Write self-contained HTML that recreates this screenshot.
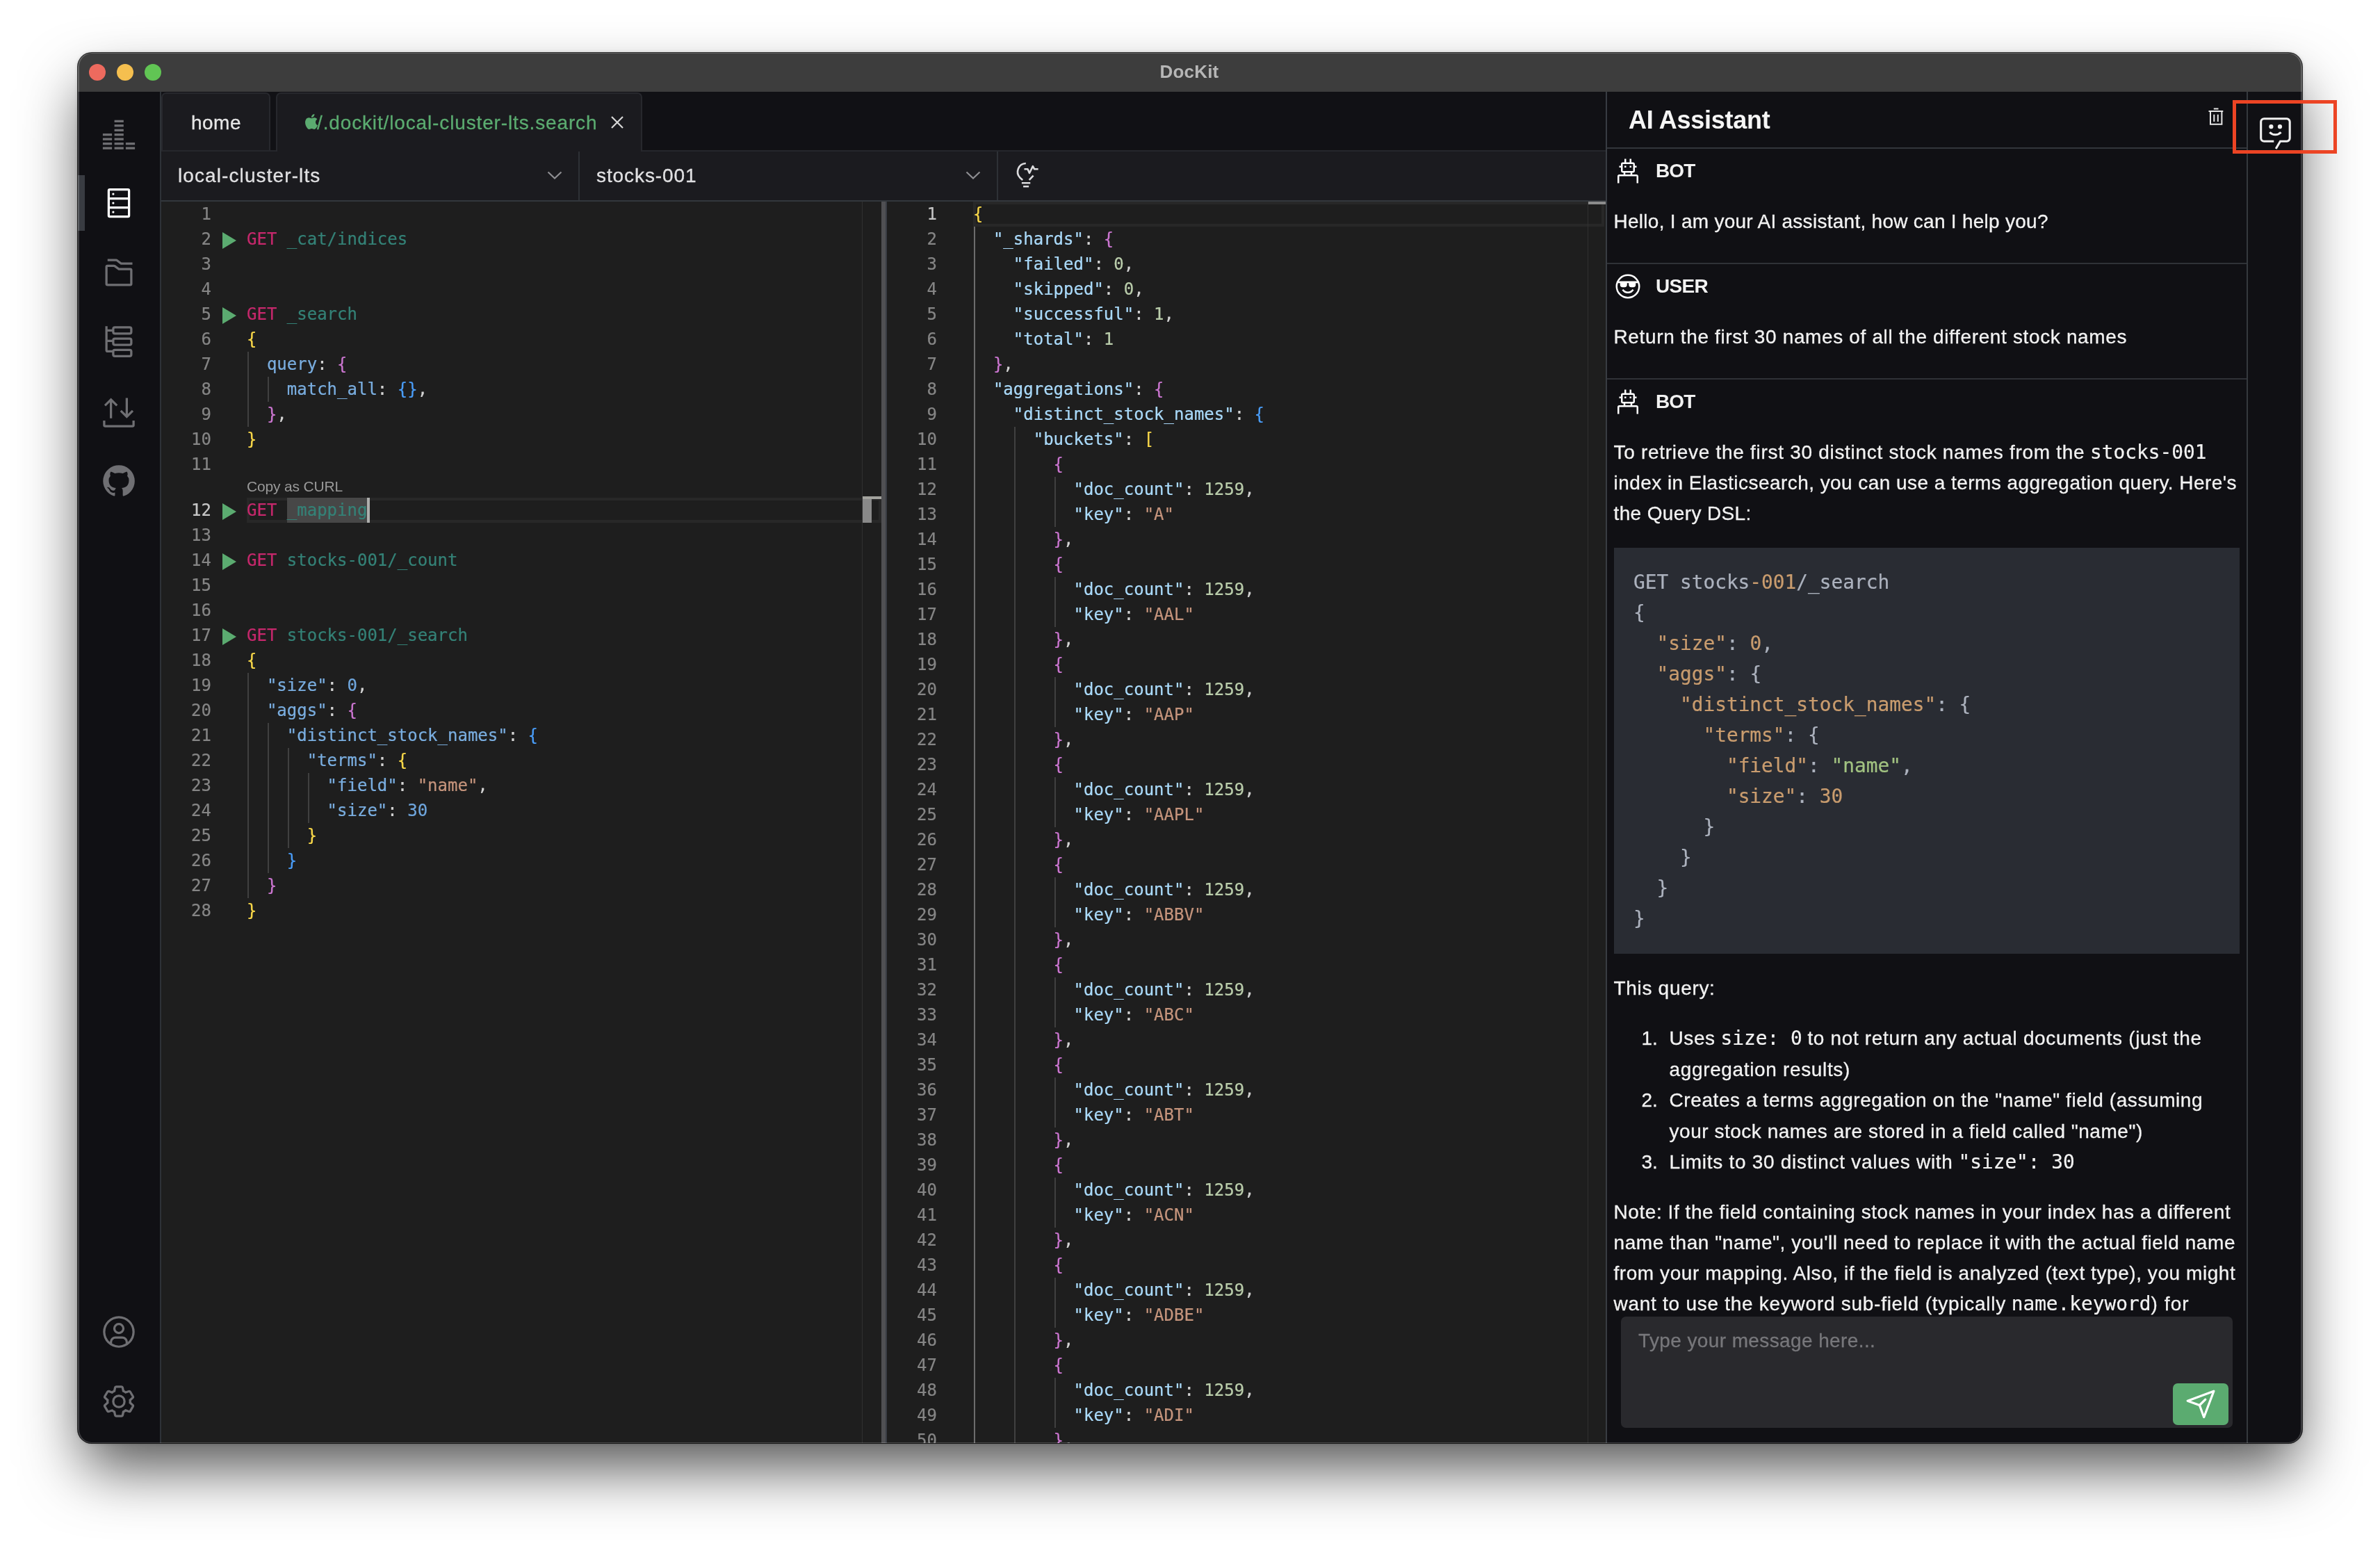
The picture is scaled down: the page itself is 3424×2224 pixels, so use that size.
<!DOCTYPE html>
<html lang="en"><head><meta charset="utf-8"><title>DocKit</title>
<style>
html,body{margin:0;padding:0}
body{width:3424px;height:2224px;background:#fff;overflow:hidden;position:relative;font-family:"Liberation Sans",sans-serif}
i{display:block;position:absolute;font-style:normal}
.win{will-change:transform;position:absolute;left:112px;top:76px;width:3200px;height:2000px;border-radius:20px;overflow:hidden;background:#101014;
 box-shadow:0 0 0 1px rgba(0,0,0,.8),0 43px 87px -8px rgba(0,0,0,.685),0 0 6px rgba(0,0,0,.17)}
.win:after{content:"";position:absolute;left:0;top:0;right:0;bottom:0;border-radius:20px;border:solid rgba(255,255,255,.2);border-width:1px 2px;pointer-events:none;z-index:50}
.titlebar{position:absolute;left:0;top:0;width:3200px;height:56px;background:#3d3d3d}
.tl{position:absolute;top:16px;width:24px;height:24px;border-radius:50%}
.tl.r{left:16px;background:#ed6a5e}.tl.y{left:56px;background:#f5bf4f}.tl.g{left:96px;background:#61c554}
.title{position:absolute;left:0;width:3200px;top:0;line-height:56px;text-align:center;font-weight:bold;font-size:26px;color:#b6b6b6;text-indent:-2px;letter-spacing:.18px;margin-top:-1px}
/* sidebar */
.side{position:absolute;left:0;top:56px;width:118px;height:1944px;background:#101014;border-right:2px solid #2e3237}
.side svg{position:absolute;left:33px;width:52px;height:52px;fill:#6f6f73}
.side svg.on{fill:#fff}
.side .ind{left:0;top:120px;width:10px;height:80px;background:#393c42}
/* tab bar */
.tabbar{position:absolute;left:120px;top:56px;width:2078px;height:84px;background:#111115;border-bottom:2px solid #26272c}
.tab{position:absolute;top:1px;height:85px;box-sizing:border-box;background:#1b1b1f;border:2px solid #27282d;border-bottom:none;border-radius:7px 7px 0 0;font-size:28px;line-height:84px;color:#e6e6e6;white-space:nowrap}
.tab.t1{left:0px;width:157px;height:83px;text-align:center;letter-spacing:.5px;text-indent:1px}
.tab.t2{left:165px;width:527px;color:#5bab70;height:87px}
.toolbar{position:absolute;left:120px;top:142px;width:2078px;height:70px;background:#1b1b1f;border-bottom:2px solid #33373c}
.toolbar .txt{position:absolute;top:0;line-height:69px;font-size:28px;color:#e0e0e2;white-space:nowrap}
.toolbar .vd{top:0;width:2px;height:70px;background:#2e3136}
/* editors */
.editor{position:absolute;top:214px;height:1786px;background:#1e1e1e;overflow:hidden;font-family:"DejaVu Sans Mono","Liberation Mono",monospace;font-size:24px;line-height:36px;color:#d4d4d4}
.ed-left{left:120px;width:1036px}
.ed-right{left:1164px;width:1034px}
.splitter{position:absolute;left:1156px;top:214px;width:8px;height:1786px;background:#505053;border-right:2px solid #3a3e45;box-sizing:border-box}
.ln{position:absolute;left:0;width:72px;text-align:right;color:#858585;height:36px}
.ln.act{color:#c6c6c6}
.cl{position:absolute;white-space:pre;height:36px;letter-spacing:0}
.ed-left .cl{left:123px}.ed-right .cl{left:124px}
.play{left:88px;width:0;height:0;border-left:20px solid #5bab70;border-top:12px solid transparent;border-bottom:12px solid transparent}
.curline{position:absolute;height:36px;box-sizing:border-box;border:4px solid #282828}
.gd{width:2px;background:#404040}
.gd.ga{background:#6c6c6c}
.lens{position:absolute;left:123px;height:30px;line-height:28.5px;letter-spacing:-.16px;font-family:"Liberation Sans",sans-serif;font-size:21px;color:#999}
.cursor{width:4px;height:36px;background:#aeafad}
.sel{background:#474747;display:inline-block;height:36px}
.ovline{top:0;width:1px;height:1786px;background:#303030}
.ovmark{width:13px;height:36px;background:#898989}
.ovcur{width:27px;height:4px;background:#a3a39e}
.kw{color:#c6286c}.path{color:#348277}.key{color:#7aaee0}.num{color:#6fa6dd}.str{color:#c5947c}.p{color:#d4d4d4}
.b1{color:#f9d849}.b2{color:#cc76d1}.b3{color:#4a9df8}
.jk{color:#aadafa}.jn{color:#bacdab}.js{color:#c5947c}
/* chat */
.chat{position:absolute;left:2198px;top:56px;width:920px;height:1944px;border-left:2px solid #383c42;background:#101014;overflow:hidden;color:#f2f2f2}
.chat .hd{position:absolute;left:0;top:0;width:920px;height:80px;border-bottom:2px solid #32363b}
.chat .hd .t{position:absolute;left:31px;top:1.5px;letter-spacing:-.28px;line-height:78px;font-size:36px;font-weight:bold;color:#f5f5f5;white-space:nowrap}
.msg{position:absolute;left:0;width:920px;border-bottom:2px solid #2f3237}
.msg .ic{position:absolute;left:10px;top:12px;width:40px;height:40px;fill:#fff}
.msg .who{position:absolute;left:70px;top:12px;line-height:40px;font-size:28px;font-weight:bold;color:#f2f2f2}
.tx{position:absolute;left:9.5px;font-size:28px;line-height:44px;white-space:nowrap;color:#f2f2f2}
.tx code,.mono{font-family:"DejaVu Sans Mono","Liberation Mono",monospace;font-size:27.8px}
pre.code{position:absolute;left:10px;width:844px;margin:0;padding:28px;background:#292c33;color:#acb2be;font-family:"DejaVu Sans Mono","Liberation Mono",monospace;font-size:27.8px;line-height:44px;height:528px}
.ho{color:#c99c6e}.hg{color:#a1c281}
.inp{position:absolute;left:20px;top:1762px;width:880px;height:160px;border-radius:7px;background:#29292d}
.inp .ph{position:absolute;left:25px;top:13px;letter-spacing:.39px;line-height:44px;font-size:28px;color:#77777b;white-space:nowrap}
.send{position:absolute;left:794px;top:96px;width:80px;height:60px;border-radius:7px;background:#5bab70}
.strip{position:absolute;left:3120px;top:56px;width:80px;height:1944px;border-left:2px solid #35393e;background:#101014}
.redbox{position:absolute;left:3212px;top:144px;width:140px;height:67px;border:5px solid #ec4424}
.tab .apple{position:absolute;left:40px;top:29px;width:18px;height:22px;fill:#5bab70}
.tab .tt{position:absolute;left:57px;top:0;letter-spacing:.86px}
.tab .x{position:absolute;left:480px;top:32px;width:18px;height:18px}
.toolbar .chev{position:absolute;top:28px;width:22px;height:12px}
.toolbar .bulb{position:absolute;left:1222px;top:15px;width:44px;height:44px}
.chat .trash{position:absolute;left:864px;top:22px;width:24px;height:28px}
.send svg{position:absolute;left:0;top:0;width:80px;height:60px}
.strip .chatic{position:absolute;left:14.5px;top:33px;width:52px;height:52px}
.li{position:absolute;left:40px}
.lt{position:absolute;left:80px;top:0}
/*FIT*/
.hello{letter-spacing:0.273px}
.return{letter-spacing:0.642px}
.tq{letter-spacing:0.688px}
.l1{letter-spacing:0.707px}
.l2{letter-spacing:0.449px}
.l3{letter-spacing:0.369px}
.l4{letter-spacing:.6px}
.l5{letter-spacing:0.652px}
.l6{letter-spacing:0.650px}
.l7{letter-spacing:0.586px}
.l8{letter-spacing:0.527px}
.l9{letter-spacing:.72px}
.l10{letter-spacing:0.563px}
.l11{letter-spacing:0.567px}
.l12{letter-spacing:0.561px}
.l13{letter-spacing:.73px}
.l14{letter-spacing:1.086px}
.who.bot{letter-spacing:-.9px}.who.user{letter-spacing:-.7px}
.tx code{letter-spacing:0}
.tx.lst{line-height:44.6px}
.tx,.tab,.toolbar .txt,.inp .ph{-webkit-text-stroke:.3px currentColor}
.tx code,.editor,pre.code{-webkit-text-stroke:.22px currentColor}
.lens{-webkit-text-stroke:0}

</style></head>
<body>
<div class="win">
<div class="titlebar"><span class="tl r"></span><span class="tl y"></span><span class="tl g"></span><div class="title">DocKit</div></div>
<div class="side">
<i class="ind"></i>
<svg style="top:35px" viewBox="0 0 52 52"><g><rect x="2.9" y="25.1" width="13.200" height="3.300"/><rect x="2.9" y="31.5" width="13.200" height="3.300"/><rect x="2.9" y="38.1" width="13.200" height="3.300"/><rect x="2.9" y="44.5" width="13.200" height="3.300"/><rect x="19.6" y="5.7" width="13.200" height="3.300"/><rect x="19.6" y="12.1" width="13.200" height="3.300"/><rect x="19.6" y="18.7" width="13.200" height="3.300"/><rect x="19.6" y="25.1" width="13.200" height="3.300"/><rect x="19.6" y="31.5" width="13.200" height="3.300"/><rect x="19.6" y="38.1" width="13.200" height="3.300"/><rect x="19.6" y="44.5" width="13.200" height="3.300"/><rect x="35.9" y="38.1" width="13.200" height="3.300"/><rect x="35.9" y="44.5" width="13.200" height="3.300"/></g></svg>
<svg class="on" style="top:134px" viewBox="0 0 32 32"><path d="M24 3H8a2 2 0 0 0-2 2v22a2 2 0 0 0 2 2h16a2 2 0 0 0 2-2V5a2 2 0 0 0-2-2zm0 2v6H8V5zM8 19v-6h16v6zm0 8v-6h16v6z"/><circle cx="11" cy="8" r="1"/><circle cx="11" cy="16" r="1"/><circle cx="11" cy="24" r="1"/></svg>
<svg style="top:234px" viewBox="0 0 32 32"><path d="M26 28H6a2.002 2.002 0 0 1-2-2V11a2.002 2.002 0 0 1 2-2h5.667a2.012 2.012 0 0 1 1.2.4l3.466 2.6H26a2.002 2.002 0 0 1 2 2v12a2.002 2.002 0 0 1-2 2zM11.667 11H6v15h20V14H15.667z"/><path d="M28 9H17.667l-4-3H6V4h7.667a2.012 2.012 0 0 1 1.2.4L18.333 7H28z"/></svg>
<svg style="top:334px" viewBox="0 0 32 32" fill="none"><g fill="none" stroke="#6f6f73" stroke-width="2"><path d="M5 2v21.3a1 1 0 0 0 1 1h4.5M5 5.8h5.5M5 15h5.5"/><rect x="11" y="3" width="16" height="5.6" rx="1.5"/><rect x="11" y="13" width="16" height="5.6" rx="1.5"/><rect x="11" y="23" width="16" height="5.6" rx="1.5"/></g></svg>
<svg style="top:434px" viewBox="0 0 32 32"><path d="M28 24v4H4v-4H2v4a2 2 0 0 0 2 2h24a2 2 0 0 0 2-2v-4z"/><path d="M27.6 14.6L24 18.2V4h-2v14.2l-3.6-3.6L17 16l6 6l6-6l-1.4-1.4z"/><path d="M9 4l-6 6l1.4 1.4L8 7.8V22h2V7.8l3.6 3.6L15 10L9 4z"/></svg>
<svg style="top:534px" viewBox="0 0 32 32"><path fill-rule="evenodd" d="M16 2a14 14 0 0 0-4.43 27.28c.7.13 1-.3 1-.67v-2.38c-3.89.84-4.71-1.88-4.71-1.88a3.71 3.71 0 0 0-1.62-2.05c-1.27-.86.1-.85.1-.85a2.94 2.94 0 0 1 2.14 1.45a3 3 0 0 0 4.08 1.16a2.93 2.93 0 0 1 .88-1.87c-3.1-.36-6.37-1.56-6.37-6.92a5.400 5.400 0 0 1 1.44-3.760a5 5 0 0 1 .14-3.700s1.170-.380 3.850 1.430a13.300 13.300 0 0 1 7 0c2.670-1.810 3.840-1.430 3.840-1.430a5 5 0 0 1 .14 3.700a5.400 5.400 0 0 1 1.440 3.760c0 5.380-3.270 6.560-6.390 6.910a3.330 3.330 0 0 1 .95 2.590v3.840c0 .46.250.81 1 .67A14 14 0 0 0 16 2z"/></svg>
<svg style="top:1758px" viewBox="0 0 32 32"><path d="M16 8a5 5 0 1 0 5 5a5 5 0 0 0-5-5zm0 8a3 3 0 1 1 3-3a3.003 3.003 0 0 1-3 3z"/><path d="M16 2a14 14 0 1 0 14 14A14.016 14.016 0 0 0 16 2zm-6 24.377V25a3.003 3.003 0 0 1 3-3h6a3.003 3.003 0 0 1 3 3v1.377a11.899 11.899 0 0 1-12 0zm13.992-1.451A5.002 5.002 0 0 0 19 20h-6a5.002 5.002 0 0 0-4.992 4.926a12 12 0 1 1 15.985 0z"/></svg>
<svg style="top:1858px" viewBox="0 0 32 32"><path d="M27 16.76V16v-.77l1.920-1.680A2 2 0 0 0 29.300 11l-2.360-4a2 2 0 0 0-1.730-1a2 2 0 0 0-.640.100l-2.430.820a11.350 11.350 0 0 0-1.310-.750l-.510-2.520a2 2 0 0 0-2-1.610h-4.680a2 2 0 0 0-2 1.610l-.510 2.520a11.480 11.480 0 0 0-1.320.750l-2.380-.860A2 2 0 0 0 6.790 6a2 2 0 0 0-1.730 1L2.700 11a2 2 0 0 0 .410 2.510L5 15.240v1.530l-1.890 1.680A2 2 0 0 0 2.700 21l2.360 4a2 2 0 0 0 1.730 1a2 2 0 0 0 .640-.100l2.430-.820a11.350 11.350 0 0 0 1.310.750l.510 2.520a2 2 0 0 0 2 1.610h4.720a2 2 0 0 0 2-1.610l.510-2.520a11.480 11.480 0 0 0 1.320-.750l2.420.820a2 2 0 0 0 .640.100a2 2 0 0 0 1.730-1l2.280-4a2 2 0 0 0-.410-2.510zM25.210 24l-3.430-1.160a8.860 8.860 0 0 1-2.710 1.570L18.360 28h-4.720l-.710-3.550a9.360 9.360 0 0 1-2.700-1.570L6.790 24l-2.360-4l2.720-2.400a8.900 8.900 0 0 1 0-3.130L4.430 12l2.360-4l3.430 1.160a8.860 8.860 0 0 1 2.710-1.570L13.640 4h4.720l.71 3.550a9.360 9.360 0 0 1 2.700 1.570L25.210 8l2.360 4l-2.720 2.400a8.900 8.900 0 0 1 0 3.130L27.570 20z"/><path d="M16 22a6 6 0 1 1 6-6a5.940 5.940 0 0 1-6 6zm0-10a3.910 3.910 0 0 0-4 4a3.910 3.910 0 0 0 4 4a3.910 3.910 0 0 0 4-4a3.910 3.910 0 0 0-4-4z"/></svg>
</div>
<div class="tabbar">
<div class="tab t1">home</div>
<div class="tab t2"><svg class="apple" viewBox="2.200 0 19.600 24"><path d="M12.152 6.896c-.948 0-2.415-1.078-3.960-1.040-2.040.027-3.910 1.183-4.961 3.014-2.117 3.675-.546 9.103 1.519 12.090 1.013 1.454 2.208 3.090 3.792 3.039 1.520-.065 2.090-.987 3.935-.987 1.831 0 2.350.987 3.960.948 1.637-.026 2.676-1.480 3.676-2.948 1.156-1.688 1.636-3.325 1.662-3.415-.039-.013-3.182-1.221-3.220-4.857-.026-3.040 2.480-4.494 2.597-4.559-1.429-2.090-3.623-2.324-4.390-2.376-2-.156-3.675 1.090-4.610 1.090zM15.530 3.830c.843-1.012 1.400-2.427 1.245-3.830-1.207.052-2.662.805-3.532 1.818-.780.896-1.454 2.338-1.273 3.714 1.338.104 2.715-.688 3.559-1.701"/></svg><span class="tt">/.dockit/local-cluster-lts.search</span><svg class="x" viewBox="0 0 18 18"><path d="M1 1L17 17M17 1L1 17" stroke="#d8d8d8" stroke-width="2.2" fill="none"/></svg></div>
</div>
<div class="toolbar">
<div class="txt" style="left:24px;letter-spacing:1.1px">local-cluster-lts</div>
<svg class="chev" style="left:555px" viewBox="0 0 22 12"><path d="M1.500 1.500L11 10.500L20.500 1.500" stroke="#8e8e92" stroke-width="2.200" fill="none"/></svg>
<i class="vd" style="left:600px"></i>
<div class="txt" style="left:626px;letter-spacing:.91px">stocks-001</div>
<svg class="chev" style="left:1157px" viewBox="0 0 22 12"><path d="M1.500 1.500L11 10.500L20.500 1.500" stroke="#8e8e92" stroke-width="2.200" fill="none"/></svg>
<i class="vd" style="left:1202px"></i>
<svg class="bulb" viewBox="0 0 44 44"><g fill="none" stroke="#dcdcde" stroke-width="2.600"><path d="M21.800 2A12.200 12.200 0 0 0 13.600 22.800L17.200 25.900"/><path d="M32.600 19.600L26.700 25.900"/><path d="M19.500 10.300h5l2.500 5.700l4.900-9.800l2.300 4.100h5.400" stroke-linejoin="round"/><path d="M15.900 30.200h12.400M18.100 35.200h8"/></g></svg>
</div>
<div class="editor ed-left">
<div class="curline" style="left:123px;top:426px;width:913px"></div>
<i class="gd" style="left:124.0px;top:216px;height:108px"></i><i class="gd" style="left:152.9px;top:252px;height:36px"></i><i class="gd" style="left:124.0px;top:678px;height:324px"></i><i class="gd" style="left:152.9px;top:750px;height:216px"></i><i class="gd" style="left:181.8px;top:786px;height:144px"></i><i class="gd" style="left:210.7px;top:822px;height:72px"></i>
<div class="ln" style="top:0px">1</div>
<div class="ln" style="top:36px">2</div><i class="play" style="top:44px"></i><div class="cl" style="top:36px"><span class="kw">GET</span> <span class="path">_cat/indices</span></div>
<div class="ln" style="top:72px">3</div>
<div class="ln" style="top:108px">4</div>
<div class="ln" style="top:144px">5</div><i class="play" style="top:152px"></i><div class="cl" style="top:144px"><span class="kw">GET</span> <span class="path">_search</span></div>
<div class="ln" style="top:180px">6</div><div class="cl" style="top:180px"><span class="b1">{</span></div>
<div class="ln" style="top:216px">7</div><div class="cl" style="top:216px">  <span class="key">query</span><span class="p">: </span><span class="b2">{</span></div>
<div class="ln" style="top:252px">8</div><div class="cl" style="top:252px">    <span class="key">match_all</span><span class="p">: </span><span class="b3">{}</span><span class="p">,</span></div>
<div class="ln" style="top:288px">9</div><div class="cl" style="top:288px">  <span class="b2">}</span><span class="p">,</span></div>
<div class="ln" style="top:324px">10</div><div class="cl" style="top:324px"><span class="b1">}</span></div>
<div class="ln" style="top:360px">11</div>
<div class="ln act" style="top:426px">12</div><i class="play" style="top:434px"></i><div class="cl" style="top:426px"><span class="kw">GET</span> <span class="path sel">_mapping</span></div>
<div class="ln" style="top:462px">13</div>
<div class="ln" style="top:498px">14</div><i class="play" style="top:506px"></i><div class="cl" style="top:498px"><span class="kw">GET</span> <span class="path">stocks-001/_count</span></div>
<div class="ln" style="top:534px">15</div>
<div class="ln" style="top:570px">16</div>
<div class="ln" style="top:606px">17</div><i class="play" style="top:614px"></i><div class="cl" style="top:606px"><span class="kw">GET</span> <span class="path">stocks-001/_search</span></div>
<div class="ln" style="top:642px">18</div><div class="cl" style="top:642px"><span class="b1">{</span></div>
<div class="ln" style="top:678px">19</div><div class="cl" style="top:678px">  <span class="key">"size"</span><span class="p">: </span><span class="num">0</span><span class="p">,</span></div>
<div class="ln" style="top:714px">20</div><div class="cl" style="top:714px">  <span class="key">"aggs"</span><span class="p">: </span><span class="b2">{</span></div>
<div class="ln" style="top:750px">21</div><div class="cl" style="top:750px">    <span class="key">"distinct_stock_names"</span><span class="p">: </span><span class="b3">{</span></div>
<div class="ln" style="top:786px">22</div><div class="cl" style="top:786px">      <span class="key">"terms"</span><span class="p">: </span><span class="b1">{</span></div>
<div class="ln" style="top:822px">23</div><div class="cl" style="top:822px">        <span class="key">"field"</span><span class="p">: </span><span class="str">"name"</span><span class="p">,</span></div>
<div class="ln" style="top:858px">24</div><div class="cl" style="top:858px">        <span class="key">"size"</span><span class="p">: </span><span class="num">30</span></div>
<div class="ln" style="top:894px">25</div><div class="cl" style="top:894px">      <span class="b1">}</span></div>
<div class="ln" style="top:930px">26</div><div class="cl" style="top:930px">    <span class="b3">}</span></div>
<div class="ln" style="top:966px">27</div><div class="cl" style="top:966px">  <span class="b2">}</span></div>
<div class="ln" style="top:1002px">28</div><div class="cl" style="top:1002px"><span class="b1">}</span></div>
<div class="lens" style="top:396px">Copy as CURL</div>
<i class="cursor" style="left:296.4px;top:426px"></i>
<i class="ovline" style="left:1008px"></i><i class="ovmark" style="left:1009px;top:426px"></i><i class="ovcur" style="left:1009px;top:424px"></i>
</div>
<div class="splitter"></div>
<div class="editor ed-right">
<div class="curline" style="left:124px;top:0px;width:908px"></div>
<i class="gd ga" style="left:125.0px;top:36px;height:1764px"></i><i class="gd" style="left:182.8px;top:324px;height:1476px"></i><i class="gd" style="left:240.6px;top:396px;height:72px"></i><i class="gd" style="left:240.6px;top:540px;height:72px"></i><i class="gd" style="left:240.6px;top:684px;height:72px"></i><i class="gd" style="left:240.6px;top:828px;height:72px"></i><i class="gd" style="left:240.6px;top:972px;height:72px"></i><i class="gd" style="left:240.6px;top:1116px;height:72px"></i><i class="gd" style="left:240.6px;top:1260px;height:72px"></i><i class="gd" style="left:240.6px;top:1404px;height:72px"></i><i class="gd" style="left:240.6px;top:1548px;height:72px"></i><i class="gd" style="left:240.6px;top:1692px;height:72px"></i>
<div class="ln act" style="top:0px">1</div><div class="cl" style="top:0px"><span class="b1">{</span></div>
<div class="ln" style="top:36px">2</div><div class="cl" style="top:36px">  <span class="jk">"_shards"</span><span class="p">: </span><span class="b2">{</span></div>
<div class="ln" style="top:72px">3</div><div class="cl" style="top:72px">    <span class="jk">"failed"</span><span class="p">: </span><span class="jn">0</span><span class="p">,</span></div>
<div class="ln" style="top:108px">4</div><div class="cl" style="top:108px">    <span class="jk">"skipped"</span><span class="p">: </span><span class="jn">0</span><span class="p">,</span></div>
<div class="ln" style="top:144px">5</div><div class="cl" style="top:144px">    <span class="jk">"successful"</span><span class="p">: </span><span class="jn">1</span><span class="p">,</span></div>
<div class="ln" style="top:180px">6</div><div class="cl" style="top:180px">    <span class="jk">"total"</span><span class="p">: </span><span class="jn">1</span></div>
<div class="ln" style="top:216px">7</div><div class="cl" style="top:216px">  <span class="b2">}</span><span class="p">,</span></div>
<div class="ln" style="top:252px">8</div><div class="cl" style="top:252px">  <span class="jk">"aggregations"</span><span class="p">: </span><span class="b2">{</span></div>
<div class="ln" style="top:288px">9</div><div class="cl" style="top:288px">    <span class="jk">"distinct_stock_names"</span><span class="p">: </span><span class="b3">{</span></div>
<div class="ln" style="top:324px">10</div><div class="cl" style="top:324px">      <span class="jk">"buckets"</span><span class="p">: </span><span class="b1">[</span></div>
<div class="ln" style="top:360px">11</div><div class="cl" style="top:360px">        <span class="b2">{</span></div>
<div class="ln" style="top:396px">12</div><div class="cl" style="top:396px">          <span class="jk">"doc_count"</span><span class="p">: </span><span class="jn">1259</span><span class="p">,</span></div>
<div class="ln" style="top:432px">13</div><div class="cl" style="top:432px">          <span class="jk">"key"</span><span class="p">: </span><span class="js">"A"</span></div>
<div class="ln" style="top:468px">14</div><div class="cl" style="top:468px">        <span class="b2">}</span><span class="p">,</span></div>
<div class="ln" style="top:504px">15</div><div class="cl" style="top:504px">        <span class="b2">{</span></div>
<div class="ln" style="top:540px">16</div><div class="cl" style="top:540px">          <span class="jk">"doc_count"</span><span class="p">: </span><span class="jn">1259</span><span class="p">,</span></div>
<div class="ln" style="top:576px">17</div><div class="cl" style="top:576px">          <span class="jk">"key"</span><span class="p">: </span><span class="js">"AAL"</span></div>
<div class="ln" style="top:612px">18</div><div class="cl" style="top:612px">        <span class="b2">}</span><span class="p">,</span></div>
<div class="ln" style="top:648px">19</div><div class="cl" style="top:648px">        <span class="b2">{</span></div>
<div class="ln" style="top:684px">20</div><div class="cl" style="top:684px">          <span class="jk">"doc_count"</span><span class="p">: </span><span class="jn">1259</span><span class="p">,</span></div>
<div class="ln" style="top:720px">21</div><div class="cl" style="top:720px">          <span class="jk">"key"</span><span class="p">: </span><span class="js">"AAP"</span></div>
<div class="ln" style="top:756px">22</div><div class="cl" style="top:756px">        <span class="b2">}</span><span class="p">,</span></div>
<div class="ln" style="top:792px">23</div><div class="cl" style="top:792px">        <span class="b2">{</span></div>
<div class="ln" style="top:828px">24</div><div class="cl" style="top:828px">          <span class="jk">"doc_count"</span><span class="p">: </span><span class="jn">1259</span><span class="p">,</span></div>
<div class="ln" style="top:864px">25</div><div class="cl" style="top:864px">          <span class="jk">"key"</span><span class="p">: </span><span class="js">"AAPL"</span></div>
<div class="ln" style="top:900px">26</div><div class="cl" style="top:900px">        <span class="b2">}</span><span class="p">,</span></div>
<div class="ln" style="top:936px">27</div><div class="cl" style="top:936px">        <span class="b2">{</span></div>
<div class="ln" style="top:972px">28</div><div class="cl" style="top:972px">          <span class="jk">"doc_count"</span><span class="p">: </span><span class="jn">1259</span><span class="p">,</span></div>
<div class="ln" style="top:1008px">29</div><div class="cl" style="top:1008px">          <span class="jk">"key"</span><span class="p">: </span><span class="js">"ABBV"</span></div>
<div class="ln" style="top:1044px">30</div><div class="cl" style="top:1044px">        <span class="b2">}</span><span class="p">,</span></div>
<div class="ln" style="top:1080px">31</div><div class="cl" style="top:1080px">        <span class="b2">{</span></div>
<div class="ln" style="top:1116px">32</div><div class="cl" style="top:1116px">          <span class="jk">"doc_count"</span><span class="p">: </span><span class="jn">1259</span><span class="p">,</span></div>
<div class="ln" style="top:1152px">33</div><div class="cl" style="top:1152px">          <span class="jk">"key"</span><span class="p">: </span><span class="js">"ABC"</span></div>
<div class="ln" style="top:1188px">34</div><div class="cl" style="top:1188px">        <span class="b2">}</span><span class="p">,</span></div>
<div class="ln" style="top:1224px">35</div><div class="cl" style="top:1224px">        <span class="b2">{</span></div>
<div class="ln" style="top:1260px">36</div><div class="cl" style="top:1260px">          <span class="jk">"doc_count"</span><span class="p">: </span><span class="jn">1259</span><span class="p">,</span></div>
<div class="ln" style="top:1296px">37</div><div class="cl" style="top:1296px">          <span class="jk">"key"</span><span class="p">: </span><span class="js">"ABT"</span></div>
<div class="ln" style="top:1332px">38</div><div class="cl" style="top:1332px">        <span class="b2">}</span><span class="p">,</span></div>
<div class="ln" style="top:1368px">39</div><div class="cl" style="top:1368px">        <span class="b2">{</span></div>
<div class="ln" style="top:1404px">40</div><div class="cl" style="top:1404px">          <span class="jk">"doc_count"</span><span class="p">: </span><span class="jn">1259</span><span class="p">,</span></div>
<div class="ln" style="top:1440px">41</div><div class="cl" style="top:1440px">          <span class="jk">"key"</span><span class="p">: </span><span class="js">"ACN"</span></div>
<div class="ln" style="top:1476px">42</div><div class="cl" style="top:1476px">        <span class="b2">}</span><span class="p">,</span></div>
<div class="ln" style="top:1512px">43</div><div class="cl" style="top:1512px">        <span class="b2">{</span></div>
<div class="ln" style="top:1548px">44</div><div class="cl" style="top:1548px">          <span class="jk">"doc_count"</span><span class="p">: </span><span class="jn">1259</span><span class="p">,</span></div>
<div class="ln" style="top:1584px">45</div><div class="cl" style="top:1584px">          <span class="jk">"key"</span><span class="p">: </span><span class="js">"ADBE"</span></div>
<div class="ln" style="top:1620px">46</div><div class="cl" style="top:1620px">        <span class="b2">}</span><span class="p">,</span></div>
<div class="ln" style="top:1656px">47</div><div class="cl" style="top:1656px">        <span class="b2">{</span></div>
<div class="ln" style="top:1692px">48</div><div class="cl" style="top:1692px">          <span class="jk">"doc_count"</span><span class="p">: </span><span class="jn">1259</span><span class="p">,</span></div>
<div class="ln" style="top:1728px">49</div><div class="cl" style="top:1728px">          <span class="jk">"key"</span><span class="p">: </span><span class="js">"ADI"</span></div>
<div class="ln" style="top:1764px">50</div><div class="cl" style="top:1764px">        <span class="b2">}</span><span class="p">,</span></div>
<i class="ovline" style="left:1008px"></i><i class="ovcur" style="left:1009px;top:0px;background:#8c8c8c"></i>
</div>
<div class="chat">
<div class="hd"><div class="t">AI Assistant</div>
<svg class="trash" viewBox="0 0 24 28"><g fill="none" stroke="#e6e6e6" stroke-width="2"><path d="M8.800 2.600h6.700M1.500 6h20.800M4 6v18.800h16.400V6M9.300 10.800v10.200M14.800 10.800v10.200"/></g></svg></div>
<div class="msg" style="top:82px;height:164px">
<svg class="ic" viewBox="0 0 32 32"><path d="M18 10h2v2h-2zM12 10h2v2h-2z"/><path d="M26 20h-5v-2h1a2.002 2.002 0 0 0 2-2v-4h2v-2h-2V8a2.002 2.002 0 0 0-2-2h-2V2h-2v4h-4V2h-2v4h-2a2.002 2.002 0 0 0-2 2v2H6v2h2v4a2.002 2.002 0 0 0 2 2h1v2H6a2.002 2.002 0 0 0-2 2v8h2v-8h20v8h2v-8a2.002 2.002 0 0 0-2-2zM10 8h12v8H10zm3 10h6v2h-6z"/></svg><div class="who bot">BOT</div>
<div class="tx hello" style="top:83px">Hello, I am your AI assistant, how can I help you?</div>
</div>
<div class="msg" style="top:248px;height:164px">
<svg class="ic" viewBox="0 0 32 32"><path fill-rule="evenodd" d="M16 2a14 14 0 1 0 0 28a14 14 0 1 0 0-28zm0 2a12 12 0 1 1 0 24a12 12 0 1 1 0-24z"/><path d="M4.800 10h22.400v2.200H4.800zM7 11h8v3a3 3 0 0 1-3 3h-2a3 3 0 0 1-3-3zM17 11h8v3a3 3 0 0 1-3 3h-2a3 3 0 0 1-3-3z"/><path d="M16 24a8 8 0 0 0 6.850-3.890l-1.710-1a6 6 0 0 1-10.280 0l-1.710 1A8 8 0 0 0 16 24z"/></svg><div class="who user">USER</div>
<div class="tx return" style="top:83px">Return the first 30 names of all the different stock names</div>
</div>
<div class="msg" style="top:414px;height:1600px;border:none">
<svg class="ic" viewBox="0 0 32 32"><path d="M18 10h2v2h-2zM12 10h2v2h-2z"/><path d="M26 20h-5v-2h1a2.002 2.002 0 0 0 2-2v-4h2v-2h-2V8a2.002 2.002 0 0 0-2-2h-2V2h-2v4h-4V2h-2v4h-2a2.002 2.002 0 0 0-2 2v2H6v2h2v4a2.002 2.002 0 0 0 2 2h1v2H6a2.002 2.002 0 0 0-2 2v8h2v-8h20v8h2v-8a2.002 2.002 0 0 0-2-2zM10 8h12v8H10zm3 10h6v2h-6z"/></svg><div class="who bot">BOT</div>
<div class="tx" style="top:83px"><span class="l1">To retrieve the first 30 distinct stock names from the</span> <code>stocks-001</code><br><span class="l2">index in Elasticsearch, you can use a terms aggregation query. Here's</span><br><span class="l3">the Query DSL:</span></div>
<pre class="code" style="top:242px">GET stocks<span class="ho">-001</span>/_search
{
  <span class="ho">"size"</span>: <span class="ho">0</span>,
  <span class="ho">"aggs"</span>: {
    <span class="ho">"distinct_stock_names"</span>: {
      <span class="ho">"terms"</span>: {
        <span class="ho">"field"</span>: <span class="hg">"name"</span>,
        <span class="ho">"size"</span>: <span class="ho">30</span>
      }
    }
  }
}</pre>
<div class="tx tq" style="top:854.4px">This query:</div>
<div class="tx lst" style="top:926px"><span class="li">1.</span><span class="lt"><span class="l4">Uses</span> <code>size: 0</code> <span class="l5">to not return any actual documents (just the</span><br><span class="l6">aggregation results)</span></span></div>
<div class="tx lst" style="top:1015.2px"><span class="li">2.</span><span class="lt"><span class="l7">Creates a terms aggregation on the "name" field (assuming</span><br><span class="l8">your stock names are stored in a field called "name")</span></span></div>
<div class="tx lst" style="top:1104.4px"><span class="li">3.</span><span class="lt"><span class="l9">Limits to 30 distinct values with</span> <code>"size": 30</code></span></div>
<div class="tx" style="top:1176.2px"><span class="l10">Note: If the field containing stock names in your index has a different</span><br><span class="l11">name than "name", you'll need to replace it with the actual field name</span><br><span class="l12">from your mapping. Also, if the field is analyzed (text type), you might</span><br><span class="l13">want to use the keyword sub-field (typically</span> <code>name.keyword</code><span class="l14">) for</span></div>
</div>
<div class="inp"><div class="ph">Type your message here...</div><div class="send"><svg viewBox="0 0 80 60"><g fill="none" stroke="#fff" stroke-width="3.200" stroke-linejoin="round" stroke-linecap="round"><path d="M58.900 11.200L21.200 25.200L38.400 31.500L44.700 48.700Z"/><path d="M38.400 31.500L46.800 23.100"/></g></svg></div></div>
</div>
<div class="strip"><svg class="chatic" viewBox="0 0 52 52"><g fill="none" stroke="#f0f0f0" stroke-width="3.100"><path d="M22.300 38.200H8.200a4.500 4.500 0 0 1-4.500-4.500V10.300a4.500 4.500 0 0 1 4.500-4.500h32.500a4.500 4.500 0 0 1 4.500 4.500v23.400a4.500 4.500 0 0 1-4.500 4.500H31.500L25.200 49"/><path d="M16.300 25.200a11 11 0 0 0 16.200 0"/></g><circle cx="18.400" cy="17.200" r="3.100" fill="#f0f0f0"/><circle cx="31" cy="17.200" r="3.100" fill="#f0f0f0"/></svg></div>
</div>
<div class="redbox"></div>
</body></html>
